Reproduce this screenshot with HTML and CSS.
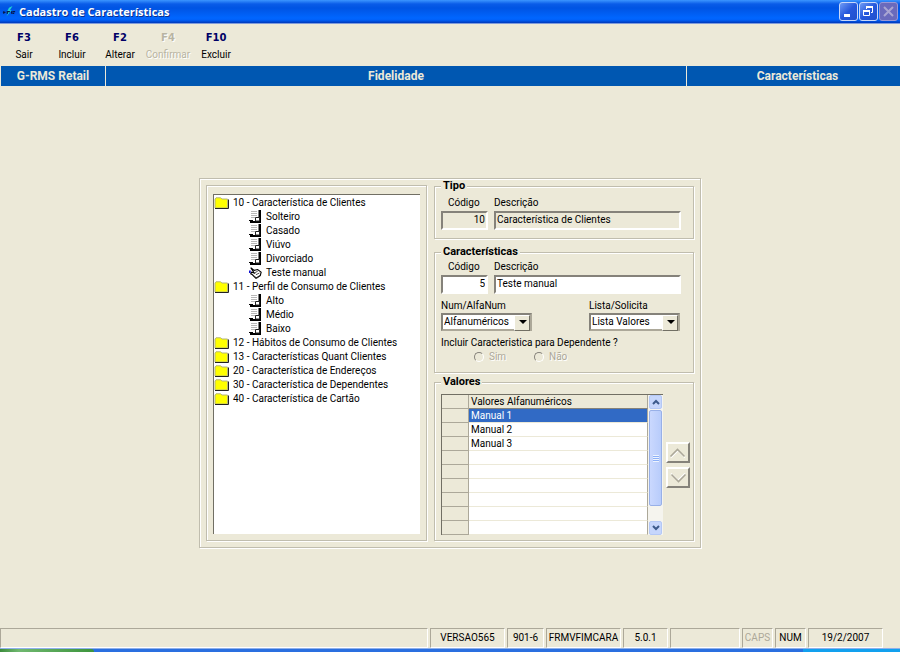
FILE: index.html
```html
<!DOCTYPE html>
<html lang="pt-BR">
  <head>
    <meta charset="UTF-8" />
    <meta name="viewport" content="width=device-width, initial-scale=1.0" />
    <title>Cadastro de Características</title>
    <link rel="stylesheet" href="styles.css">
  </head>
  <body>
    <svg class="defs" aria-hidden="true">
      <symbol id="folder" viewBox="0 0 16 12">
        <path d="M1 11V2L2 .8h4.500L8 2h5.500v9z" fill="#ffff00" stroke="#b4b478" />
        <path d="M1 11.500h13.500V2.500" fill="none" stroke="#222" />
      </symbol>
      <symbol id="sheet" viewBox="0 0 13 14">
        <path d="M2 1.500h6M2 3.500h6M2 5.500h6M2 7.500h4" stroke="#b8b8b8" />
        <path d="M9.500 0H12v13H1v-2h8.500z" fill="#000" />
        <path d="M6.500 11V7.500h4V11z" fill="#fff" stroke="#222" />
        <path d="M0 10.500h4" stroke="#000" />
      </symbol>
      <symbol id="hand" viewBox="0 0 15 14">
        <path d="M2 1l4 3 4-1 4 3-1 4-5 3-4-4-2-1 1-2 3 1z" fill="#fff" stroke="#000" stroke-width="1.300" />
        <path d="M6 7l4-2M8 9l4-2M5 10l4 3 4-3" fill="none" stroke="#333" />
        <path d="M0 4h2v3H0z" fill="#1010d0" />
      </symbol>
      <symbol id="chevron" viewBox="0 0 18 10">
        <path d="M2 9.500l7-7 7 7" fill="none" stroke="#fff" stroke-width="1.500" />
        <path d="M1.500 8.500l7-7 7 7" fill="none" stroke="#aca899" stroke-width="1.600" />
      </symbol>
      <symbol id="arrow" viewBox="0 0 8 6">
        <path d="M1 5l3-3 3 3" fill="none" stroke="#3c5a8c" stroke-width="2" />
      </symbol>
    </svg>

    <header class="titlebar">
      <svg class="logo" viewBox="0 0 16 16">
        <path d="M5 13l2-4H5l3-6 4-2-3 5h2z" fill="#20d8d0" />
        <path d="M1 8.500h3M2 7v3M6 7v3M6 7.500h3M11 7v3M12 7.500h3M12 9.500h2" stroke="#061a50" stroke-width="1.500" />
      </svg>
      <h1>Cadastro de Características</h1>
      <div class="window-buttons">
        <button class="win-btn" aria-label="Minimizar">
          <svg viewBox="0 0 17 17"><path d="M4 11h6v3H4z" fill="#fff" /></svg>
        </button>
        <button class="win-btn" aria-label="Restaurar">
          <svg viewBox="0 0 17 17">
            <path d="M6.500 6V4.500h6v5H11" fill="none" stroke="#fff" />
            <path d="M6 4h7" stroke="#fff" stroke-width="2" />
            <path d="M3.500 7.500h6v5h-6z" fill="none" stroke="#fff" />
            <path d="M3 8h7" stroke="#fff" stroke-width="2" />
          </svg>
        </button>
        <button class="win-btn win-close" aria-label="Fechar" disabled>
          <svg viewBox="0 0 17 17"><path d="M4 4l9 9M13 4l-9 9" stroke="#a9a5d2" stroke-width="2" /></svg>
        </button>
      </div>
    </header>

    <nav class="toolbar">
      <button class="tool"><b>F3</b><span>Sair</span></button>
      <button class="tool"><b>F6</b><span>Incluir</span></button>
      <button class="tool"><b>F2</b><span>Alterar</span></button>
      <button class="tool" disabled><b>F4</b><span>Confirmar</span></button>
      <button class="tool"><b>F10</b><span>Excluir</span></button>
    </nav>

    <div class="band">
      <div class="band-system">G-RMS Retail</div>
      <div class="band-module">Fidelidade</div>
      <div class="band-screen">Características</div>
    </div>

    <main>
      <div class="panel">
        <div class="tree-frame">
          <ul class="tree">
            <li><div class="node"><svg class="folder"><use href="#folder" /></svg>10 - Característica de Clientes</div>
              <ul>
                <li class="node"><svg class="sheet"><use href="#sheet" /></svg>Solteiro</li>
                <li class="node"><svg class="sheet"><use href="#sheet" /></svg>Casado</li>
                <li class="node"><svg class="sheet"><use href="#sheet" /></svg>Viúvo</li>
                <li class="node"><svg class="sheet"><use href="#sheet" /></svg>Divorciado</li>
                <li class="node"><svg class="sheet"><use href="#hand" /></svg>Teste manual</li>
              </ul>
            </li>
            <li><div class="node"><svg class="folder"><use href="#folder" /></svg>11 - Perfil de Consumo de Clientes</div>
              <ul>
                <li class="node"><svg class="sheet"><use href="#sheet" /></svg>Alto</li>
                <li class="node"><svg class="sheet"><use href="#sheet" /></svg>Médio</li>
                <li class="node"><svg class="sheet"><use href="#sheet" /></svg>Baixo</li>
              </ul>
            </li>
            <li><div class="node"><svg class="folder"><use href="#folder" /></svg>12 - Hábitos de Consumo de Clientes</div></li>
            <li><div class="node"><svg class="folder"><use href="#folder" /></svg>13 - Características Quant Clientes</div></li>
            <li><div class="node"><svg class="folder"><use href="#folder" /></svg>20 - Característica de Endereços</div></li>
            <li><div class="node"><svg class="folder"><use href="#folder" /></svg>30 - Característica de Dependentes</div></li>
            <li><div class="node"><svg class="folder"><use href="#folder" /></svg>40 - Característica de Cartão</div></li>
          </ul>
        </div>

        <form class="details">
          <fieldset>
            <legend>Tipo</legend>
            <div class="fields fields-tipo">
              <label class="code-label" for="tipo-codigo">Código</label>
              <label for="tipo-descricao">Descrição</label>
              <input class="code" type="text" id="tipo-codigo" value="10" readonly />
              <input type="text" id="tipo-descricao" value="Característica de Clientes" readonly />
            </div>
          </fieldset>

          <fieldset>
            <legend>Características</legend>
            <div class="fields">
              <label class="code-label" for="codigo">Código</label>
              <label for="descricao">Descrição</label>
              <input class="code" type="text" id="codigo" value="5" />
              <input type="text" id="descricao" value="Teste manual" />
            </div>
            <div class="combos">
              <div>
                <label for="tipo-valor">Num/AlfaNum</label>
                <div class="combo">
                  <select id="tipo-valor"><option>Alfanuméricos</option><option>Numéricos</option></select>
                </div>
              </div>
              <div>
                <label for="lista">Lista/Solicita</label>
                <div class="combo">
                  <select id="lista"><option>Lista Valores</option><option>Solicita</option></select>
                </div>
              </div>
            </div>
            <div role="radiogroup" aria-labelledby="dependente">
              <div class="question" id="dependente">Incluir Caracteristica para Dependente ?</div>
              <div class="radios">
                <label><input type="radio" name="dependente" disabled />Sim</label>
                <label><input type="radio" name="dependente" disabled />Não</label>
              </div>
            </div>
          </fieldset>

          <fieldset class="values-group">
            <legend>Valores</legend>
            <div class="values">
              <div class="grid">
                <table>
                  <thead>
                    <tr><th class="mark"></th><th>Valores Alfanuméricos</th></tr>
                  </thead>
                  <tbody>
                    <tr class="selected"><td class="mark"></td><td>Manual 1</td></tr>
                    <tr><td class="mark"></td><td>Manual 2</td></tr>
                    <tr><td class="mark"></td><td>Manual 3</td></tr>
                    <tr><td class="mark"></td><td></td></tr>
                    <tr><td class="mark"></td><td></td></tr>
                    <tr><td class="mark"></td><td></td></tr>
                    <tr><td class="mark"></td><td></td></tr>
                    <tr><td class="mark"></td><td></td></tr>
                    <tr><td class="mark"></td><td></td></tr>
                  </tbody>
                </table>
                <div class="scrollbar">
                  <button type="button" class="scroll-btn" aria-label="Rolar para cima"><svg><use href="#arrow" /></svg></button>
                  <div class="thumb"><i></i></div>
                  <button type="button" class="scroll-btn down" aria-label="Rolar para baixo"><svg><use href="#arrow" /></svg></button>
                </div>
              </div>
              <div class="movers">
                <button type="button" class="mover" aria-label="Mover para cima"><svg><use href="#chevron" /></svg></button>
                <button type="button" class="mover down" aria-label="Mover para baixo"><svg><use href="#chevron" /></svg></button>
              </div>
            </div>
          </fieldset>
        </form>
      </div>
    </main>

    <footer class="statusbar">
      <div class="message"></div>
      <div class="w75">VERSAO565</div>
      <div class="w37">901-6</div>
      <div class="w75">FRMVFIMCARA</div>
      <div class="w45">5.0.1</div>
      <div class="w70"></div>
      <div class="w31 off">CAPS</div>
      <div class="w31">NUM</div>
      <div class="w75">19/2/2007</div>
    </footer>
    <div class="taskbar">
      <div class="start"></div>
      <div class="tray"></div>
    </div>
  </body>
</html>
```

FILE: styles.css
```css
* {
  box-sizing: border-box;
}
body {
  margin: 0;
  min-height: 100vh;
  display: flex;
  flex-direction: column;
  background-color: #ece9d8;
  color: #000000;
  font-family: Roboto, Arial, sans-serif;
  font-size: 10px;
  line-height: 14px;
}
button,
input,
select {
  font: inherit;
  color: inherit;
  margin: 0;
  border-radius: 0;
}
svg {
  display: block;
  flex: none;
}
.defs {
  position: absolute;
  width: 0;
  height: 0;
}

/* title bar */
.titlebar {
  display: flex;
  align-items: center;
  height: 24px;
  padding: 0 2px 1px;
  background: linear-gradient(#3c96ff 0, #0a5ce8 4px, #0054e3 8px, #0066ff 18px, #0060f8 20px, #0038b8 23px, #ffffff 24px);
}
.logo {
  width: 14px;
  height: 16px;
}
.titlebar h1 {
  flex: 1;
  margin: 0 0 0 3px;
  font: bold 11px/14px "Open Sans", sans-serif;
  color: #ffffff;
  text-shadow: 1px 1px 0 #0a2f8c;
}
.window-buttons {
  display: flex;
  gap: 1px;
}
.win-btn {
  width: 19px;
  height: 19px;
  padding: 0;
  border: 1px solid #c8d8fa;
  border-radius: 3px;
  background: linear-gradient(135deg, #6f9bf5, #2658dc 50%, #2050cc);
}
.win-close {
  border-color: #9a98d4;
  background: #6a6abc;
}

/* function keys */
.toolbar {
  display: flex;
  height: 42px;
  padding: 7px 0 0 0;
}
.tool {
  display: flex;
  flex-direction: column;
  align-items: center;
  gap: 3px;
  width: 48px;
  padding: 0;
  border: none;
  background: none;
}
.tool b {
  font: bold 10px/14px "DejaVu Sans", sans-serif;
  color: #000066;
}
.tool:disabled,
.tool:disabled b {
  color: #b8b4a2;
  text-shadow: 1px 1px 0 #ffffff;
}

.band {
  display: flex;
  height: 20px;
  background-color: #0057b1;
  color: #ece9d8;
  font: bold 12px/21px Roboto, sans-serif;
  text-align: center;
}
.band div {
  border-left: 1px solid #ece9d8;
}
.band-system {
  width: 105px;
}
.band-module {
  flex: 1;
}
.band-screen {
  width: 214px;
  padding-left: 8px;
}

main {
  flex: 1;
  padding: 92px 8px 16px;
}
.panel,
.tree-frame,
fieldset {
  border: 1px solid #c0bdae;
  box-shadow: 1px 1px 0 #ffffff, inset 1px 1px 0 #ffffff;
}
.panel {
  display: grid;
  grid-template-columns: 221px 260px;
  gap: 7px;
  width: max-content;
  margin: 0 auto;
  padding: 6px;
}

/* tree */
.tree-frame {
  display: flex;
  padding: 8px 6px 6px;
}
.tree,
.tree ul {
  margin: 0;
  padding: 0;
  list-style: none;
}
.tree {
  flex: 1;
  padding-top: 1px;
  background-color: #ffffff;
  border-top: 1px solid #716f64;
  border-left: 1px solid #716f64;
}
.tree ul {
  padding-left: 35px;
}
.node {
  display: flex;
  align-items: center;
  height: 14px;
  white-space: nowrap;
}
.folder {
  width: 16px;
  height: 12px;
  margin-right: 3px;
}
.sheet {
  width: 13px;
  height: 14px;
  margin-right: 4px;
}

/* details */
.details {
  margin-top: -5px;
}
fieldset {
  min-width: 0;
  margin: 0;
  padding: 0 3px 8px 6px;
}
fieldset + fieldset {
  margin-top: 7px;
}
fieldset.values-group {
  margin-top: 3px;
  padding-bottom: 5px;
}
legend {
  padding: 0 2px;
  background-color: #ece9d8;
  font: bold 11px/12px Roboto, sans-serif;
}
label {
  display: block;
}
.fields {
  display: grid;
  grid-template-columns: 47px 187px;
  column-gap: 6px;
  row-gap: 1px;
  padding-top: 2px;
}
.fields-tipo {
  padding-top: 4px;
}
.code-label {
  padding-left: 7px;
}
input[type="text"] {
  width: 100%;
  height: 19px;
  padding: 0 1px 2px;
  border: 2px solid;
  border-color: #85827a #ffffff #ffffff #85827a;
  background-color: #ffffff;
}
input[type="text"]:read-only {
  background-color: #ece9d8;
}
input.code {
  text-align: right;
}
.combos {
  display: flex;
  justify-content: space-between;
  padding: 5px 10px 0 0;
}
.combo {
  position: relative;
  width: 91px;
}
.combo::before {
  content: "";
  position: absolute;
  top: 2px;
  right: 2px;
  width: 14px;
  height: 14px;
  background-color: #ece9d8;
  border: 1px solid;
  border-color: #ffffff #716f64 #716f64 #ffffff;
  pointer-events: none;
}
.combo::after {
  content: "";
  position: absolute;
  top: 7px;
  right: 5px;
  border: 4px solid transparent;
  border-top-color: #000000;
  border-bottom: 0;
  pointer-events: none;
}
.combo select {
  display: block;
  appearance: none;
  width: 100%;
  height: 18px;
  padding: 0 16px 0 1px;
  border: 2px solid;
  border-color: #85827a #aca899 #aca899 #85827a;
  background-color: #ffffff;
}
.question {
  padding-top: 5px;
}
.radios {
  display: flex;
  padding-left: 33px;
}
.radios label {
  display: flex;
  align-items: center;
  gap: 5px;
  width: 60px;
  color: #aca899;
  text-shadow: 1px 1px 0 #ffffff;
}
.radios input {
  appearance: none;
  width: 10px;
  height: 10px;
  border: 1px solid;
  border-color: #85827a #ffffff #ffffff #85827a;
  border-radius: 50%;
}

/* values grid */
.values {
  display: flex;
  gap: 3px;
  padding-top: 6px;
}
.grid {
  display: flex;
  width: 222px;
  height: 141px;
  overflow: hidden;
  background-color: #ffffff;
  border-top: 1px solid #716f64;
  border-left: 1px solid #716f64;
}
table {
  flex: 1;
  border-collapse: separate;
  border-spacing: 0;
  table-layout: fixed;
  width: 206px;
}
th,
td {
  height: 14px;
  padding: 0 2px;
  line-height: 13px;
  text-align: left;
  font-weight: normal;
  border-bottom: 1px solid #ece9d8;
}
th {
  background-color: #ece9d8;
  border-bottom-color: #85827a;
}
th,
td {
  border-right: 1px solid #aca899;
}
.mark {
  width: 27px;
  background-color: #ece9d8;
  border-bottom-color: #aca899;
  border-right-color: #aca899;
}
.selected td:last-child {
  background-color: #316ac5;
  color: #ffffff;
}
.scrollbar {
  display: flex;
  flex-direction: column;
  width: 15px;
  padding-left: 1px;
  background-color: #f5f4ee;
}
.scroll-btn {
  display: flex;
  align-items: center;
  justify-content: center;
  width: 13px;
  height: 14px;
  padding: 0;
  border: 1px solid #b4c8f6;
  border-radius: 2px;
  background-color: #c6d6fc;
}
.scroll-btn svg {
  width: 8px;
  height: 6px;
}
.scroll-btn.down {
  margin-top: auto;
}
.down svg {
  transform: rotate(180deg);
}
.thumb {
  display: flex;
  align-items: center;
  justify-content: center;
  width: 13px;
  height: 96px;
  margin-top: 1px;
  border: 1px solid #98b0e8;
  border-radius: 2px;
  background: linear-gradient(90deg, #cad8fe, #b8ccfb);
}
.thumb i {
  width: 6px;
  height: 7px;
  background: repeating-linear-gradient(#eef4fe 0 1px, #8cb0f8 1px 2px);
}
.movers {
  display: flex;
  flex-direction: column;
  gap: 4px;
  padding-top: 48px;
}
.mover {
  display: flex;
  align-items: center;
  justify-content: center;
  width: 24px;
  height: 21px;
  padding: 0;
  border: 2px solid;
  border-color: #ffffff #85827a #85827a #ffffff;
  background-color: #ece9d8;
}
.mover svg {
  width: 18px;
  height: 10px;
}

/* status bar */
.statusbar {
  display: flex;
  gap: 2px;
  padding-right: 17px;
}
.statusbar div {
  height: 20px;
  border: 1px solid;
  border-color: #aca899 #ffffff #ffffff #aca899;
  text-align: center;
  line-height: 18px;
  white-space: nowrap;
}
.statusbar .message {
  flex: 1;
}
.w31 { width: 31px; }
.w37 { width: 37px; }
.w45 { width: 45px; }
.w70 { width: 70px; }
.w75 { width: 75px; }
.statusbar .off {
  color: #aca899;
}
.taskbar {
  display: flex;
  justify-content: space-between;
  height: 4px;
  background-color: #2a6fe0;
  border-top: 1px solid #8fb0ea;
}
.start {
  width: 94px;
  background: linear-gradient(90deg, #3c8c3c, #70b870 20%, #3c943c);
  border-top-right-radius: 4px;
}
.tray {
  width: 97px;
  background-color: #12a0ee;
}
```
